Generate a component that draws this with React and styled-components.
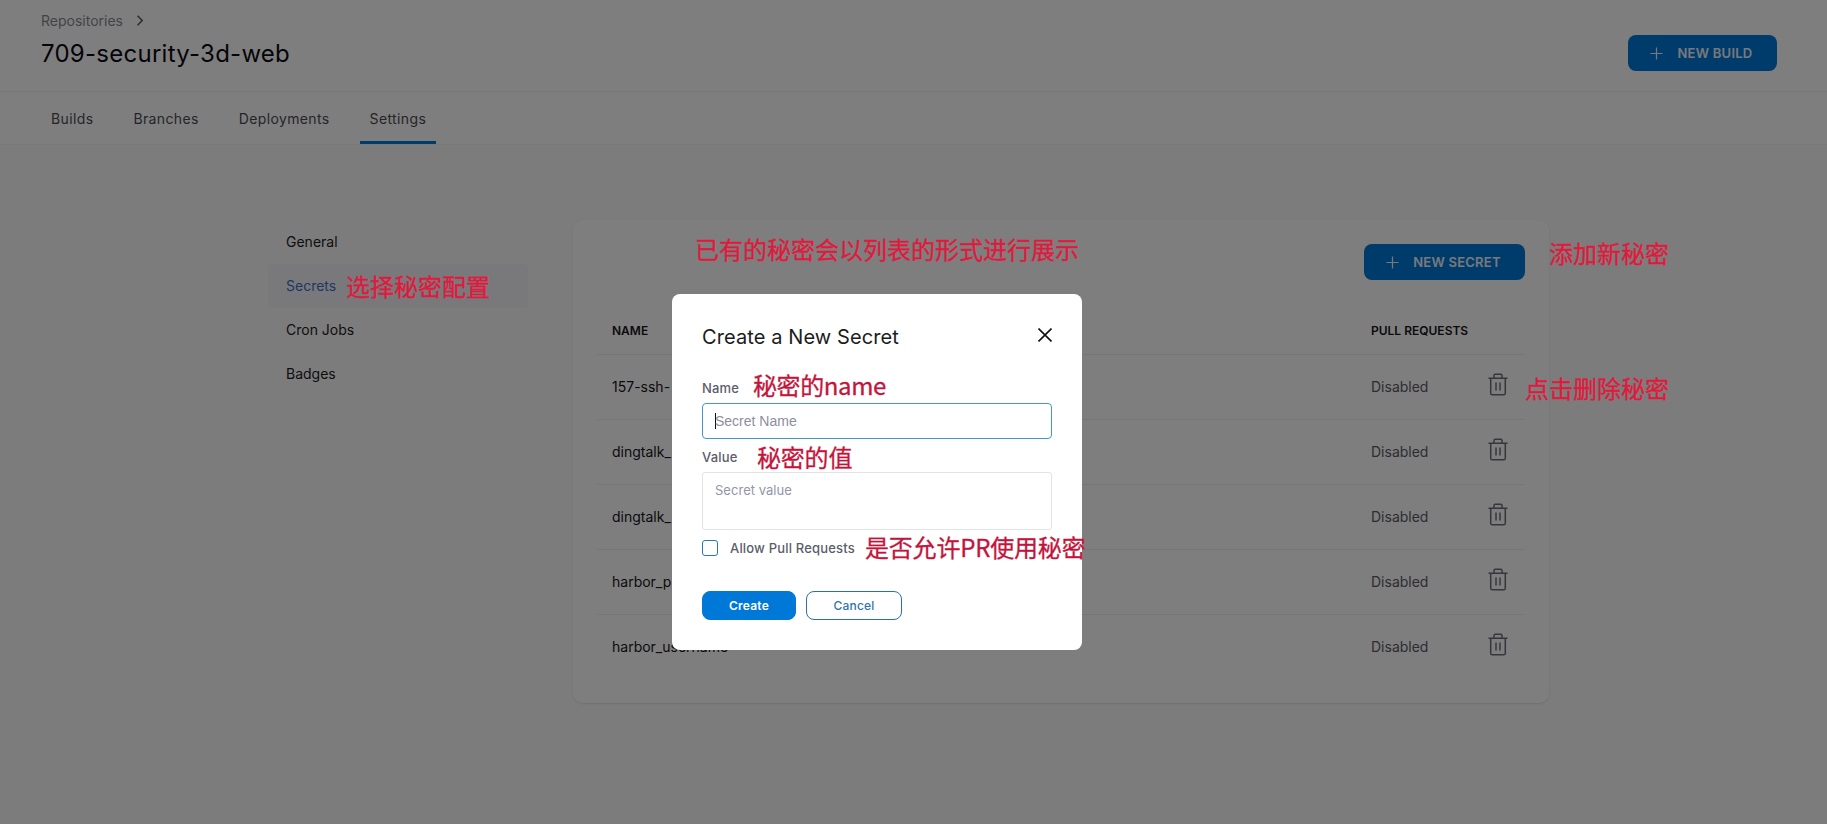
import React from "react";
import styled, { createGlobalStyle } from "styled-components";

const GlobalStyle = createGlobalStyle`
  *, *::before, *::after { box-sizing: border-box; }
  html, body { margin: 0; height: 100%; overflow: hidden; }
  body { font-family: Inter, "Noto Sans CJK SC", sans-serif; background: #f8f8f8; color: #17181d; }
  button, input, textarea { font-family: inherit; margin: 0; }
`;

const Page = styled.div`
  height: 824px;
  overflow: hidden;
`;

const Header = styled.header`
  display: flex;
  justify-content: space-between;
  height: 92px;
  padding: 11px 50px 0 41px;
  background: #fdfdfd;
  border-bottom: 1px solid #f0f0f2;
`;

const Breadcrumb = styled.div`
  display: flex;
  align-items: center;
  gap: 14px;
  height: 19px;
  font-size: 14px;
  color: #87878f;
`;

const Title = styled.h1`
  margin: 7px 0 0;
  font-size: 24px;
  line-height: 34px;
  font-weight: 400;
  letter-spacing: 0.26px;
  color: #0a0b12;
`;

const PrimaryButton = styled.button`
  display: flex;
  align-items: center;
  justify-content: center;
  gap: 14px;
  width: ${(p) => p.$width}px;
  height: 36px;
  margin-top: ${(p) => p.$top || 0}px;
  padding: 0 2px 0 0;
  border: 0;
  border-radius: 8px;
  background: #0078d7;
  color: #f0f2f8;
  font-size: 13px;
  font-weight: 600;
  letter-spacing: 0.25px;
`;

const Tabs = styled.nav`
  display: flex;
  gap: 20px;
  height: 53px;
  padding-left: 41px;
  background: #fdfdfd;
  border-bottom: 1px solid #f1f1f3;
`;

const Tab = styled.a`
  height: 52px;
  padding: 0 10px;
  line-height: 54px;
  font-size: 14px;
  letter-spacing: 0.37px;
  color: #4b4b52;
  border-bottom: 3px solid ${(p) => (p.$active ? "#0078d7" : "transparent")};
  border-radius: 2px 2px 0 0;
`;

const Content = styled.main`
  display: flex;
  gap: 45px;
  padding: 75px 0 0 268px;
`;

const SideMenu = styled.aside`
  width: 260px;
`;

const SideItem = styled.div`
  height: 44px;
  padding-left: 18px;
  line-height: 44px;
  font-size: 14px;
  border-radius: 4px;
  color: ${(p) => (p.$active ? "#3f6fc4" : "#1c1c22")};
  background: ${(p) => (p.$active ? "#f2f3f9" : "transparent")};
`;

const Card = styled.section`
  width: 976px;
  height: 483px;
  padding: 24px;
  border-radius: 10px;
  background: #fcfcfc;
  box-shadow: 0 1px 2px rgba(40, 41, 61, 0.1);
`;

const CardTop = styled.div`
  display: flex;
  justify-content: flex-end;
  height: 65px;
`;

const TableRow = styled.div`
  display: grid;
  grid-template-columns: 759px 112px 1fr;
  align-items: center;
  height: 65px;
  padding: 0 0 2px 15px;
  font-size: 14px;
  color: #16161b;
  border-bottom: ${(p) => (p.$last ? "0" : "1px solid #ececee")};
`;

const TableHead = styled(TableRow)`
  height: 46px;
  font-size: 12px;
  font-weight: 600;
`;

const Status = styled.span`
  color: #5b5b62;
`;

const TrashSvg = styled.svg`
  display: block;
  margin: -4px 0 0 5px;
`;

const Overlay = styled.div`
  position: absolute;
  inset: 0;
  display: flex;
  align-items: flex-start;
  padding: 294px 0 0 672px;
  background: rgba(0, 0, 0, 0.5);
`;

const Modal = styled.form`
  width: 410px;
  height: 356px;
  padding: 30px;
  border-radius: 8px;
  background: #fff;
`;

const ModalHead = styled.div`
  display: flex;
  justify-content: space-between;
  align-items: flex-start;
  height: 52px;
`;

const ModalTitle = styled.h2`
  margin: 0;
  font-size: 20px;
  line-height: 26px;
  font-weight: 400;
  letter-spacing: 0.1px;
  color: #1b1c22;
`;

const CloseSvg = styled.svg`
  display: block;
  margin-top: 4px;
`;

const Label = styled.label`
  display: block;
  height: ${(p) => p.$height}px;
  line-height: ${(p) => p.$line}px;
  font-size: 13px;
  font-weight: 500;
  letter-spacing: 0.2px;
  color: #5b5d6a;
`;

const Field = styled.div`
  display: flex;
  align-items: center;
  height: 36px;
  padding: 0 12px 1px;
  border: 1px solid #4298c8;
  border-radius: 4px;
  font-family: "Liberation Sans", sans-serif;
  font-size: 14px;
  color: #8d8e9e;
`;

const Caret = styled.span`
  width: 1px;
  height: 16px;
  margin-right: -1px;
  background: #111;
`;

const Area = styled.div`
  height: 58px;
  padding: 8px 12px;
  border: 1px solid #e2e3e9;
  border-radius: 3px;
  font-size: 13px;
  line-height: 18px;
  letter-spacing: 0.03px;
  color: #9495a8;
`;

const CheckRow = styled.div`
  display: flex;
  align-items: center;
  gap: 12px;
  height: 16px;
  margin-top: 10px;
  font-size: 13px;
  font-weight: 500;
  letter-spacing: 0.18px;
  color: #5b5d6a;
`;

const CheckBox = styled.span`
  width: 16px;
  height: 16px;
  border: 1px solid #2b77b0;
  border-radius: 3px;
`;

const Actions = styled.div`
  display: flex;
  gap: 10px;
  margin-top: 35px;
`;

const ActionButton = styled.button`
  width: ${(p) => (p.$primary ? 94 : 96)}px;
  height: 29px;
  padding: 0 0 1px;
  border: 1px solid ${(p) => (p.$primary ? "#0078d7" : "#2b70ab")};
  border-radius: 8px;
  background: ${(p) => (p.$primary ? "#0078d7" : "#fff")};
  color: ${(p) => (p.$primary ? "#fff" : "#2f74ae")};
  font-size: 12px;
  font-weight: ${(p) => (p.$primary ? 600 : 500)};
  letter-spacing: 0.2px;
`;

const Note = styled.span`
  position: absolute;
  left: ${(p) => p.$x}px;
  top: ${(p) => p.$y - 20}px;
  line-height: 36px;
  font-family: "Noto Sans CJK SC", sans-serif;
  font-size: 24px;
  letter-spacing: ${(p) => p.$spacing || 0}px;
  white-space: nowrap;
  color: ${(p) => (p.$inner ? "#c4143c" : "#e2183c")};
  -webkit-text-stroke: 0.3px currentColor;
`;

const PlusIcon = () => (
  <svg width="13" height="13" viewBox="0 0 14 14" fill="none" stroke="currentColor" strokeWidth="1.3">
    <path d="M7 .5v13M.5 7h13" />
  </svg>
);

const ChevronIcon = () => (
  <svg width="7" height="11" viewBox="0 0 7 11" fill="none" stroke="#5a5a60" strokeWidth="1.5">
    <path d="M.5 .8 5.2 5.5 .5 10.2" />
  </svg>
);

const TrashIcon = () => (
  <TrashSvg width="20" height="23" viewBox="0 0 20 23" fill="none" stroke="#6d6d7b" strokeWidth="1.5">
    <path d="M.5 5.2h19M6 5V2.600C6 1.800 6.500 1.300 7.300 1.300h5.400c.8 0 1.300.5 1.300 1.300V5M2.700 5.200v15c0 1 .6 1.600 1.600 1.600h11.400c1 0 1.600-.6 1.600-1.600v-15M8 9.500v8M12 9.500v8" />
  </TrashSvg>
);

const secrets = ["157-ssh-", "dingtalk_", "dingtalk_", "harbor_p", "harbor_username"];

const notes = [
  { x: 695, y: 251, text: "已有的秘密会以列表的形式进行展示" },
  { x: 346, y: 288, text: "选择秘密配置" },
  { x: 1549, y: 255, text: "添加新秘密" },
  { x: 1525, y: 390, text: "点击删除秘密" },
  { x: 753, y: 387, text: "秘密的name", inner: true, spacing: -0.4 },
  { x: 757, y: 459, text: "秘密的值", inner: true, spacing: -0.2 },
  { x: 865, y: 549, text: "是否允许PR使用秘密", inner: true, spacing: -0.2 },
];

export default function App() {
  return (
    <>
      <GlobalStyle />
      <Page>
        <Header>
          <div>
            <Breadcrumb>Repositories <ChevronIcon /></Breadcrumb>
            <Title>709-security-3d-web</Title>
          </div>
          <PrimaryButton $width={149} $top={24}><PlusIcon />NEW BUILD</PrimaryButton>
        </Header>
        <Tabs>
          <Tab>Builds</Tab>
          <Tab>Branches</Tab>
          <Tab>Deployments</Tab>
          <Tab $active>Settings</Tab>
        </Tabs>
        <Content>
          <SideMenu>
            <SideItem>General</SideItem>
            <SideItem $active>Secrets</SideItem>
            <SideItem>Cron Jobs</SideItem>
            <SideItem>Badges</SideItem>
          </SideMenu>
          <Card>
            <CardTop>
              <PrimaryButton $width={161}><PlusIcon />NEW SECRET</PrimaryButton>
            </CardTop>
            <TableHead><span>NAME</span><span>PULL REQUESTS</span></TableHead>
            {secrets.map((name, i) => (
              <TableRow key={i} $last={i === secrets.length - 1}>
                <span>{name}</span>
                <Status>Disabled</Status>
                <TrashIcon />
              </TableRow>
            ))}
          </Card>
        </Content>
      </Page>
      <Overlay>
        <Modal>
          <ModalHead>
            <ModalTitle>Create a New Secret</ModalTitle>
            <CloseSvg width="14" height="14" viewBox="0 0 14 14" fill="none" stroke="#111" strokeWidth="1.6">
              <path d="M.5.5l13 13M13.500.5l-13 13" />
            </CloseSvg>
          </ModalHead>
          <Label $height={27} $line={24}>Name</Label>
          <Field><Caret />Secret Name</Field>
          <Label $height={33} $line={37}>Value</Label>
          <Area>Secret value</Area>
          <CheckRow><CheckBox />Allow Pull Requests</CheckRow>
          <Actions>
            <ActionButton type="button" $primary>Create</ActionButton>
            <ActionButton type="button">Cancel</ActionButton>
          </Actions>
        </Modal>
      </Overlay>
      {notes.map((n) => (
        <Note key={n.text} $x={n.x} $y={n.y} $inner={n.inner} $spacing={n.spacing}>{n.text}</Note>
      ))}
    </>
  );
}
